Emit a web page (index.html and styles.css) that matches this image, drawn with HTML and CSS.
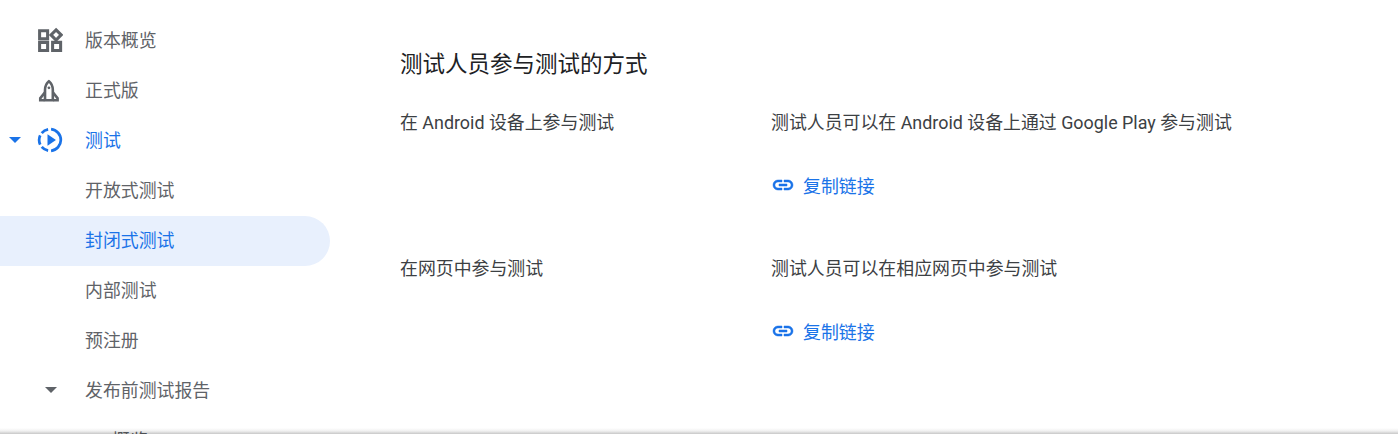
FILE: index.html
```html
<!DOCTYPE html>
<html lang="en">
  <head>
    <meta charset="UTF-8" />
    <title>测试人员参与测试的方式</title>
    <link rel="stylesheet" href="styles.css">
  </head>
  <body>
    <div class="app">
      <nav class="sidebar">
        <div class="nav-row">
          <span class="nav-arrow"></span>
          <svg class="nav-icon" viewBox="0 0 24 24" fill="none" stroke="#5f6368" stroke-width="2.800">
            <path d="M2.400 3.400h7.400v7.400H2.400zM2.400 14.200h7.400v7.400H2.400zM14.400 14.200h7.400v7.400h-7.400z"/>
            <path d="M17.600 2.600 22.300 7.300 17.600 12 12.900 7.300z"/>
          </svg>
          <span class="nav-label">版本概览</span>
        </div>
        <div class="nav-row">
          <span class="nav-arrow"></span>
          <svg class="nav-icon" viewBox="0 0 24 24" fill="none" stroke="#5f6368" stroke-width="2.400">
            <path d="M11 4C8.600 6 7.400 8.800 7.400 12v9.500h7.200V12c0-3.200-1.200-6-3.600-8z"/>
            <path fill="#5f6368" stroke="none" d="M6.800 13 1.800 19.200v3.400h5v-2.400H4.200v-.200l2.600-3.200zM15.200 13l5 6.200v3.400h-5v-2.400h2.600v-.200l-2.600-3.200z"/>
            <circle fill="#5f6368" stroke="none" cx="11" cy="10" r="1.300"/>
          </svg>
          <span class="nav-label">正式版</span>
        </div>
        <div class="nav-row active-section">
          <span class="nav-arrow down blue"></span>
          <svg class="nav-icon" viewBox="0 0 24 24" fill="none" stroke="#1a73e8" stroke-width="2.500">
            <path d="M13 2.050A10 10 0 0 1 13 21.950"/>
            <path d="M10.260 2.150A10 10 0 0 0 4.340 5.570"/>
            <path d="M2.940 7.770A10 10 0 0 0 2.940 16.230"/>
            <path d="M4.340 18.430A10 10 0 0 0 10.260 21.850"/>
            <path fill="#1a73e8" stroke="none" d="M9.700 6.700 17.500 12 9.700 17.300z"/>
          </svg>
          <span class="nav-label">测试</span>
        </div>
        <div class="nav-row"><span class="nav-label">开放式测试</span></div>
        <div class="nav-row selected"><span class="nav-label">封闭式测试</span></div>
        <div class="nav-row"><span class="nav-label">内部测试</span></div>
        <div class="nav-row"><span class="nav-label">预注册</span></div>
        <div class="nav-row">
          <span class="nav-arrow down inner"></span>
          <span class="nav-label">发布前测试报告</span>
        </div>
        <div class="nav-row sub"><span class="nav-label">概览</span></div>
      </nav>
      <main class="content">
        <h2>测试人员参与测试的方式</h2>
        <div class="method">
          <div class="method-name">在 Android 设备上参与测试</div>
          <div class="method-detail">
            <p>测试人员可以在 Android 设备上通过 Google Play 参与测试</p>
            <a class="copy-link">
              <svg viewBox="0 0 24 24"><path fill="#1a73e8" stroke="#1a73e8" stroke-width="0.500" d="M3.900 12c0-1.710 1.390-3.100 3.100-3.100h4V7H7c-2.760 0-5 2.240-5 5s2.240 5 5 5h4v-1.900H7c-1.710 0-3.100-1.390-3.100-3.100zM8 13h8v-2H8v2zm9-6h-4v1.900h4c1.710 0 3.100 1.390 3.100 3.100s-1.390 3.100-3.100 3.100h-4V17h4c2.760 0 5-2.240 5-5s-2.240-5-5-5z"/></svg>
              复制链接
            </a>
          </div>
        </div>
        <div class="method">
          <div class="method-name">在网页中参与测试</div>
          <div class="method-detail">
            <p>测试人员可以在相应网页中参与测试</p>
            <a class="copy-link">
              <svg viewBox="0 0 24 24"><path fill="#1a73e8" stroke="#1a73e8" stroke-width="0.500" d="M3.900 12c0-1.710 1.390-3.100 3.100-3.100h4V7H7c-2.760 0-5 2.240-5 5s2.240 5 5 5h4v-1.900H7c-1.710 0-3.100-1.390-3.100-3.100zM8 13h8v-2H8v2zm9-6h-4v1.900h4c1.710 0 3.100 1.390 3.100 3.100s-1.390 3.100-3.100 3.100h-4V17h4c2.760 0 5-2.240 5-5s-2.240-5-5-5z"/></svg>
              复制链接
            </a>
          </div>
        </div>
      </main>
    </div>
  </body>
</html>
```

FILE: styles.css
```css
* {
  box-sizing: border-box;
}

html,
body {
  margin: 0;
  padding: 0;
  background: #fff;
  overflow: hidden;
}

body {
  height: 442px;
  font-family: Roboto, "Noto Sans CJK SC", sans-serif;
  font-size: 17.900px;
  color: #3c4043;
}

.app {
  position: relative;
  display: flex;
  height: 434px;
  overflow: hidden;
}

/* shadow of the footer bar that sits under the page */
.app::after {
  content: "";
  position: absolute;
  left: 0;
  right: 0;
  bottom: 0;
  height: 6px;
  background: linear-gradient(rgba(0, 0, 0, 0), rgba(0, 0, 0, 0.06) 50%, rgba(0, 0, 0, 0.22));
}

.sidebar {
  flex: 0 0 330px;
  padding-top: 16px;
  color: #5f6368;
}

.nav-row {
  display: flex;
  align-items: center;
  height: 50px;
  padding-left: 85px;
  padding-bottom: 2px;
  border-radius: 0 25px 25px 0;
}

.nav-row:has(.nav-arrow) {
  padding-left: 0;
}

.nav-label {
  margin-bottom: 2px;
}

.nav-arrow {
  flex: 0 0 30px;
  display: flex;
  justify-content: center;
}

.nav-arrow.down::before {
  content: "";
  border-left: 6px solid transparent;
  border-right: 6px solid transparent;
  border-top: 6px solid #5f6368;
}

.nav-arrow.blue::before {
  border-top-color: #1a73e8;
}

.nav-arrow.inner {
  flex: 0 0 85px;
  padding-left: 16px;
}

.nav-icon {
  width: 26px;
  height: 26px;
  margin: 0 22px 0 7px;
}

.active-section {
  color: #1a73e8;
}

.selected {
  background: #e8f0fd;
  color: #1a73e8;
}

.sub {
  padding-left: 112px;
}

.content {
  flex: 1;
  padding: 0 0 0 70px;
}

h2 {
  margin: 47px 0 0;
  height: 34px;
  line-height: 34px;
  font-size: 22.500px;
  font-weight: 400;
  color: #202124;
}

.method {
  display: flex;
  margin-top: 26px;
  height: 146px;
}

.method + .method {
  margin-top: 0;
}

.method-name {
  flex: 0 0 371px;
  line-height: 32px;
}

.method-detail p {
  margin: 0;
  line-height: 32px;
}

.copy-link {
  display: flex;
  align-items: center;
  gap: 8px;
  margin-top: 30px;
  height: 32px;
  color: #1a73e8;
}

.copy-link svg {
  width: 24px;
  height: 24px;
}
```
